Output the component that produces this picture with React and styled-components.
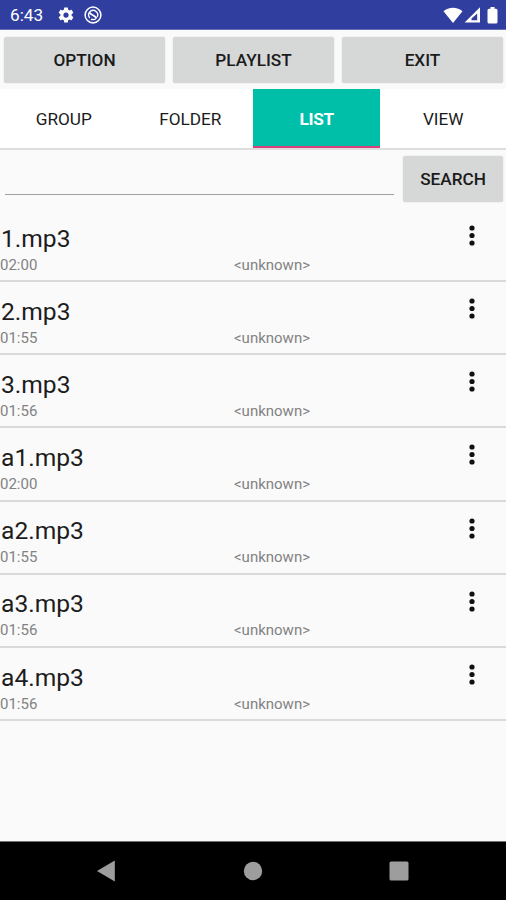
import React from "react";
import styled, { createGlobalStyle } from "styled-components";

const GlobalStyle = createGlobalStyle`
  * {
    box-sizing: border-box;
  }

  body {
    margin: 0;
    background-color: #fafafa;
    font-family: Roboto, "Liberation Sans", sans-serif;
  }
`;

const Screen = styled.div`
  width: 506px;
  height: 900px;
  display: flex;
  flex-direction: column;
  background-color: #fafafa;
  overflow: hidden;
`;

const StatusBar = styled.header`
  height: 30px;
  flex-shrink: 0;
  display: flex;
  align-items: center;
  padding: 1px 8px 0 10px;
  background-color: #303f9f;
  border-bottom: 1px solid #6470b4;
  color: #fff;
`;

const Clock = styled.span`
  width: 47px;
  font-size: 17.2px;
  line-height: 20px;
`;

const StatusIcons = styled.div`
  display: flex;
  align-items: center;
  gap: ${(props) => props.$gap};
  margin-left: ${(props) => (props.$end ? "auto" : 0)};

  svg {
    display: block;
  }
`;

const Button = styled.button`
  height: 46px;
  padding: 0;
  border: none;
  border-radius: 2.5px;
  background-color: #d6d7d7;
  box-shadow: 0 0 1.5px rgba(0, 0, 0, 0.18);
  color: #1b1b1b;
  font: 500 17.2px/20px Roboto, "Liberation Sans", sans-serif;
`;

const ButtonRow = styled.div`
  display: grid;
  grid-template-columns: repeat(3, 1fr);
  gap: 8px;
  padding: 7px 3px 6px 4px;
  flex-shrink: 0;
`;

const Tabs = styled.nav`
  height: 61px;
  flex-shrink: 0;
  display: grid;
  grid-template-columns: repeat(4, 1fr);
  background-color: #fff;
  border-bottom: 2px solid #dedede;
`;

const Tab = styled.div`
  display: flex;
  align-items: center;
  justify-content: center;
  padding-top: ${(props) => (props.$active ? "3px" : "1px")};
  padding-left: 1px;
  background-color: ${(props) => (props.$active ? "#00bfa9" : "transparent")};
  border-bottom: ${(props) => (props.$active ? "2px solid #d9407b" : "none")};
  color: ${(props) => (props.$active ? "#fff" : "#1b1b1b")};
  font-size: 17.2px;
  font-weight: ${(props) => (props.$active ? 700 : 400)};
  letter-spacing: ${(props) => (props.$active ? "-0.3px" : "normal")};
`;

const SearchRow = styled.div`
  height: 59px;
  flex-shrink: 0;
  display: flex;
  gap: 9px;
  padding: 6px 3px 0 5px;
`;

const SearchInput = styled.input`
  flex: 1;
  min-width: 0;
  height: 39px;
  padding: 0;
  border: none;
  border-bottom: 1.5px solid #a0a0a0;
  background: transparent;
  outline: none;
  font-size: 22px;
`;

const SearchButton = styled(Button)`
  width: 100px;
`;

const TrackList = styled.ul`
  flex: 1;
  min-height: 0;
  margin: 0;
  padding: 0;
  list-style: none;
`;

const Track = styled.li`
  height: 73.14px;
  display: flex;
  justify-content: space-between;
  border-bottom: 2px solid #d9d9d9;
`;

const TrackInfo = styled.div`
  flex: 1;
  padding-top: 14.8px;
`;

const Title = styled.div`
  padding-left: 1px;
  color: #1d1d1d;
  font-size: 24.6px;
  line-height: 29px;
`;

const Meta = styled.div`
  display: grid;
  grid-template-columns: 234px 1fr;
  color: #828282;
  font-size: 15px;
  line-height: 24px;
`;

const MenuIcon = styled.svg`
  width: 8px;
  height: 22px;
  margin: 16px 30px 0 0;
  fill: #111;
`;

const NavBar = styled.footer`
  height: 59px;
  flex-shrink: 0;
  display: flex;
  justify-content: space-between;
  align-items: center;
  padding: 0 97px 0 96px;
  background-color: #000;
  border-top: 1px solid #707070;
  fill: #9d9d9d;
`;

const tracks = [
  { name: "1.mp3", time: "02:00" },
  { name: "2.mp3", time: "01:55" },
  { name: "3.mp3", time: "01:56" },
  { name: "a1.mp3", time: "02:00" },
  { name: "a2.mp3", time: "01:55" },
  { name: "a3.mp3", time: "01:56" },
  { name: "a4.mp3", time: "01:56" },
];

const tabs = ["GROUP", "FOLDER", "LIST", "VIEW"];

const GearIcon = () => (
  <svg width="18" height="18" viewBox="0 0 24 24" fill="#fff">
    <path d="M19.43 12.98c.04-.32.07-.64.07-.98s-.03-.66-.07-.98l2.11-1.65c.19-.15.24-.42.12-.64l-2-3.46c-.12-.22-.39-.3-.61-.22l-2.49 1c-.52-.4-1.08-.73-1.69-.98l-.38-2.65A.49.49 0 0 0 14 2h-4c-.25 0-.46.18-.49.42l-.38 2.65c-.61.25-1.17.59-1.69.98l-2.49-1c-.23-.09-.49 0-.61.22l-2 3.46c-.13.22-.07.49.12.64l2.11 1.65c-.04.32-.07.65-.07.98s.03.66.07.98l-2.11 1.65c-.19.15-.24.42-.12.64l2 3.46c.12.22.39.3.61.22l2.49-1c.52.4 1.08.73 1.69.98l.38 2.65c.03.24.24.42.49.42h4c.25 0 .46-.18.49-.42l.38-2.65c.61-.25 1.17-.59 1.69-.98l2.49 1c.23.09.49 0 .61-.22l2-3.46c.12-.22.07-.49-.12-.64l-2.11-1.65zM12 15.5a3.5 3.5 0 1 1 0-7 3.5 3.5 0 0 1 0 7z" />
  </svg>
);

const CircleIcon = () => (
  <svg width="18" height="18" viewBox="0 0 18 18" fill="none" stroke="#fff">
    <circle cx="9" cy="9" r="7.9" strokeWidth="1.5" />
    <path d="M5.7 12A4.600 4.600 0 0 1 6.400 5.200a4.600 4.600 0 0 1 6.800 5.800M12 12.500a4.600 4.600 0 0 1-5 .6" strokeWidth="1.4" />
    <path d="M5.400 6.500c1.600 2.600 4.200 2.200 7.400 5.700" strokeWidth="1.6" />
  </svg>
);

const WifiIcon = () => (
  <svg width="20" height="16" viewBox="0 0 20 16" fill="#fff">
    <path d="M10 16 .5 4.2C3 2 6.4.8 10 .8s7 1.2 9.500 3.400z" />
  </svg>
);

const SignalIcon = () => (
  <svg width="17" height="16" viewBox="0 0 17 16">
    <path d="M16 .2V15.500H.6z" fill="#fff" />
    <path d="M13.200 6.500v6.800H7.500V11.500z" fill="#303f9f" />
  </svg>
);

const BatteryIcon = () => (
  <svg width="11" height="17" viewBox="0 0 11 17" fill="#fff">
    <path d="M3.500 0h4v1.800H9a1.500 1.500 0 0 1 1.500 1.500V15A1.500 1.500 0 0 1 9 16.500H2A1.500 1.500 0 0 1 .5 15V3.300A1.500 1.500 0 0 1 2 1.800h1.500z" />
  </svg>
);

const BatterySlot = styled.span`
  margin-left: 6px;
`;

const TrackRow = ({ name, time }) => (
  <Track>
    <TrackInfo>
      <Title>{name}</Title>
      <Meta>
        <span>{time}</span>
        <span>&lt;unknown&gt;</span>
      </Meta>
    </TrackInfo>
    <MenuIcon viewBox="0 0 8 22">
      <circle cx="4" cy="3" r="2.600" />
      <circle cx="4" cy="10.500" r="2.600" />
      <circle cx="4" cy="18" r="2.600" />
    </MenuIcon>
  </Track>
);

const App = () => {
  return (
    <Screen>
      <GlobalStyle />
      <StatusBar>
        <Clock>6:43</Clock>
        <StatusIcons $gap="9px">
          <GearIcon />
          <CircleIcon />
        </StatusIcons>
        <StatusIcons $gap="0.5px" $end>
          <WifiIcon />
          <SignalIcon />
          <BatterySlot>
            <BatteryIcon />
          </BatterySlot>
        </StatusIcons>
      </StatusBar>

      <ButtonRow>
        <Button>OPTION</Button>
        <Button>PLAYLIST</Button>
        <Button>EXIT</Button>
      </ButtonRow>

      <Tabs>
        {tabs.map((tab) => (
          <Tab key={tab} $active={tab === "LIST"}>
            {tab}
          </Tab>
        ))}
      </Tabs>

      <SearchRow>
        <SearchInput aria-label="Search" />
        <SearchButton>SEARCH</SearchButton>
      </SearchRow>

      <TrackList>
        {tracks.map((track) => (
          <TrackRow key={track.name} {...track} />
        ))}
      </TrackList>

      <NavBar>
        <svg width="20" height="22" viewBox="0 0 20 22">
          <path d="M18.800.5v21L1 11z" />
        </svg>
        <svg width="20" height="20" viewBox="0 0 20 20">
          <circle cx="10" cy="10" r="9.200" />
        </svg>
        <svg width="20" height="20" viewBox="0 0 20 20">
          <rect x="0.500" y="0.500" width="19" height="19" rx="1.500" />
        </svg>
      </NavBar>
    </Screen>
  );
};

export default App;
